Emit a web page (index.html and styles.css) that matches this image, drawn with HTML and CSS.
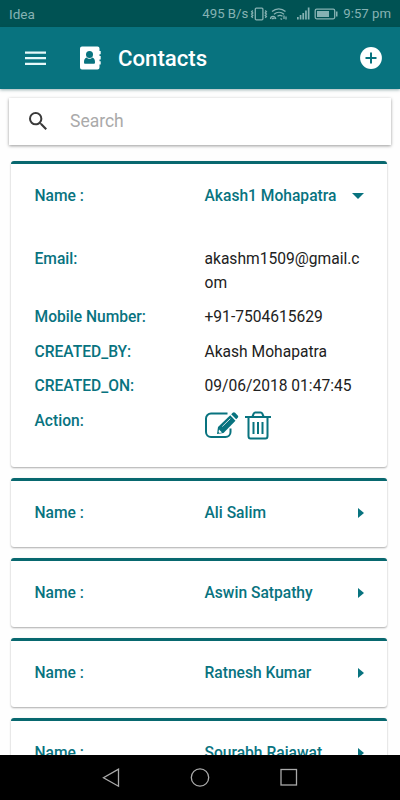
FILE: index.html
```
<!DOCTYPE html>
<html lang="en">
<head>
    <meta charset="utf-8">
    <meta name="viewport" content="width=device-width, initial-scale=1">
    <title>Contacts</title>
    <link rel="stylesheet" href="styles.css">
</head>
<body>
    <div class="statusbar">
        <span class="carrier">Idea</span>
        <span class="speed">495 B/s</span>
        <svg class="status-icons" width="90" height="16" viewBox="0 0 90 16">
            <g fill="none" stroke="#86b2b3" stroke-width="1.3">
                <rect x="5.3" y="2.2" width="7.6" height="11.6" rx="1"/>
                <path d="M2.8 4.5l-1.2 1.2 1.2 1.2-1.2 1.2 1.2 1.2-1.2 1.2 1.2 1.2M15.2 4.5l1.2 1.2-1.2 1.2 1.2 1.2-1.2 1.2 1.2 1.2-1.2 1.2"/>
                <path d="M22 5.600c4-3.700 9.500-3.700 13.500 0M24 8.300c3-2.700 7-2.700 10 0M27.500 10.300c1.500-1.200 3.500-1.200 5 0M20.500 13c.3-3.500 4.500-3.500 5.300 0M22.300 13.200c0-1.400 1.700-1.400 1.900 0"/>
                <path d="M30.500 12.400l1.500 1.200M34 9.500v3.500M36 10.500v3"/>
                <rect x="65.200" y="3.200" width="19.500" height="9.600" rx="1.500"/>
            </g>
            <g fill="#86b2b3">
                <path d="M47 11h1.700v2.500H47zM49.700 9h1.700v4.500h-1.700zM52.400 7h1.700v6.500h-1.700zM55.100 4.500h1.700v9h-1.700zM57.800 1.500h1.700v12h-1.700z"/>
                <path d="M67 5h12v6H67zM86 5.500h1.500v5H86z"/>
            </g>
        </svg>
        <span class="time">9:57 pm</span>
    </div>

    <header class="toolbar">
        <svg class="menu" width="21" height="15" viewBox="0 0 21 15" fill="#e6f8f9">
            <path d="M0 .5h21v2.300H0zM0 6h21v2.300H0zM0 11.700h21V14H0z"/>
        </svg>
        <svg class="book" width="22" height="24" viewBox="0 0 22 24">
            <path fill="#fff" d="M2 .5h15.500a2 2 0 0 1 2 2V5h1.200v3.200h-1.200v1.700h1.200v3.600h-1.200v1.700h1.200v3.300h-1.200v2.900a2 2 0 0 1-2 2H2a2 2 0 0 1-2-2V2.500a2 2 0 0 1 2-2z"/>
            <g fill="#08737f">
                <circle cx="9.500" cy="8.500" r="3.500"/>
                <path d="M6.500 11.500c-1.800.7-2.500 2.200-2.500 4.700 0 1 .5 1.500 1.300 1.500h8.400c.8 0 1.300-.5 1.300-1.500 0-2.500-.7-4-2.500-4.700-1.600 1.800-4.400 1.800-6 0z"/>
            </g>
        </svg>
        <h1>Contacts</h1>
        <svg class="add" width="22" height="22" viewBox="0 0 22 22">
            <circle cx="11" cy="11" r="10.900" fill="#fff"/>
            <path d="M11 5.500v11M5.500 11h11" stroke="#08737f" stroke-width="2"/>
        </svg>
    </header>

    <main>
        <div class="search">
            <svg width="18" height="18" viewBox="3 3 17.500 17.500" fill="#3a3a3a">
                <path d="M15.500 14h-.79l-.28-.27A6.471 6.471 0 0 0 16 9.500 6.500 6.500 0 1 0 9.500 16c1.610 0 3.090-.59 4.230-1.570l.27.28v.79l5 4.990L20.490 19l-4.990-5zm-6 0C7.010 14 5 11.990 5 9.500S7.010 5 9.500 5 14 7.010 14 9.500 11.990 14 9.500 14z"/>
            </svg>
            <input type="text" placeholder="Search" autocomplete="off">
        </div>

        <div class="card open">
            <div class="name-row">
                <span class="label">Name :</span>
                <span class="name">Akash1 Mohapatra</span>
                <span class="arrow down"></span>
            </div>
            <div class="details">
                <div class="row"><span class="label">Email:</span><span class="value">akashm1509@gmail.com</span></div>
                <div class="row"><span class="label">Mobile Number:</span><span class="value">+91-7504615629</span></div>
                <div class="row"><span class="label">CREATED_BY:</span><span class="value">Akash Mohapatra</span></div>
                <div class="row"><span class="label">CREATED_ON:</span><span class="value">09/06/2018 01:47:45</span></div>
                <div class="row">
                    <span class="label">Action:</span>
                    <span class="value actions">
                        <svg width="34" height="30" viewBox="0 0 34 30">
                            <path d="M22.500 3.500H6a5 5 0 0 0-5 5V22a5 5 0 0 0 5 5h14.500a5 5 0 0 0 5-5v-3.500" fill="none" stroke="#08737f" stroke-width="2"/>
                            <path d="M12 24l1-7L25.200 5.300l5.300 5.500L18.500 23z" fill="#08737f"/>
                            <path d="M26.200 4.200l1.500-1.400c.7-.7 1.700-.7 2.400 0l2.600 2.600c.7.700.7 1.700 0 2.400L31.200 9.300z" fill="#08737f"/>
                            <path d="M14 19.500l3 3-2.500.4-.9-.9z" fill="#fff"/>
                            <path d="M17.300 16.500l8-7.800" stroke="#fff" stroke-width=".8"/>
                        </svg>
                        <svg width="26" height="30" viewBox="0 0 26 30" fill="none" stroke="#08737f" stroke-width="2">
                            <path d="M0 7h26M7.500 6.500l1.300-3c.3-.8.800-1 1.500-1h5.400c.7 0 1.200.2 1.500 1l1.300 3M3.500 7.500V26c0 1.800.8 2.500 2 2.500h15c1.200 0 2-.7 2-2.500V7.500"/>
                            <path d="M8.500 12v12M13 12v12M17.500 12v12"/>
                        </svg>
                    </span>
                </div>
            </div>
        </div>

        <div class="card">
            <div class="name-row">
                <span class="label">Name :</span>
                <span class="name">Ali Salim</span>
                <span class="arrow"></span>
            </div>
        </div>
        <div class="card">
            <div class="name-row">
                <span class="label">Name :</span>
                <span class="name">Aswin Satpathy</span>
                <span class="arrow"></span>
            </div>
        </div>
        <div class="card">
            <div class="name-row">
                <span class="label">Name :</span>
                <span class="name">Ratnesh Kumar</span>
                <span class="arrow"></span>
            </div>
        </div>
        <div class="card">
            <div class="name-row">
                <span class="label">Name :</span>
                <span class="name">Sourabh Rajawat</span>
                <span class="arrow"></span>
            </div>
        </div>
    </main>

    <nav class="navbar">
        <svg width="20" height="20" viewBox="0 0 20 20"><path d="M17.500 1.200v17L2.500 9.700z"/></svg>
        <svg width="20" height="20" viewBox="0 0 20 20"><circle cx="10" cy="9.500" r="8.700"/></svg>
        <svg width="20" height="20" viewBox="0 0 20 20"><rect x="2" y="1.500" width="15.500" height="15.500"/></svg>
    </nav>
</body>
</html>
```
FILE: styles.css
```
* {
    box-sizing: border-box;
}

body {
    margin: 0;
    height: 800px;
    display: flex;
    flex-direction: column;
    overflow: hidden;
    background-color: #fefefe;
    font-family: Roboto, "Liberation Sans", sans-serif;
    font-size: 15.6px;
}

svg {
    display: block;
    flex: none;
}

.statusbar {
    flex: none;
    height: 27px;
    display: flex;
    align-items: center;
    padding: 0 9px;
    background-color: #005253;
    color: #86b2b3;
    font-size: 13.5px;
}

.carrier {
    flex: 1;
}

.speed,
.time {
    font-size: 13.2px;
}

.status-icons {
    margin: 0 3px 0 2px;
}

.toolbar {
    flex: none;
    height: 62px;
    display: flex;
    align-items: center;
    padding: 0 18px 0 25px;
    background-color: #08737f;
    color: white;
    box-shadow: 0 1px 3px rgba(0, 60, 65, 0.4);
}

.book {
    margin-left: 34px;
}

.toolbar h1 {
    flex: 1;
    margin: 0 0 0 16px;
    font-size: 22.2px;
    font-weight: 500;
}

main {
    flex: 1;
    min-height: 0;
    overflow: hidden;
    padding: 9px 9px 0;
}

.search {
    height: 47px;
    display: flex;
    align-items: center;
    padding-left: 20px;
    margin-bottom: 16px;
    background-color: white;
    box-shadow: 0 1px 3px rgba(0, 0, 0, 0.4);
}

.search svg {
    margin-bottom: 1px;
}

.search input {
    flex: 1;
    min-width: 0;
    margin-left: 23px;
    padding: 0 0 1px;
    border: none;
    outline: none;
    background: none;
    font-family: inherit;
    font-size: 17.5px;
}

.search input::placeholder {
    color: #aaa;
}

.card {
    height: 69px;
    margin: 0 4px 11px 2px;
    padding: 0 24px 0 23.5px;
    border-top: 3px solid #08686f;
    border-radius: 3px;
    background-color: white;
    box-shadow: 0 1px 2px rgba(0, 0, 0, 0.33);
}

.card.open {
    height: 306px;
}

.name-row,
.row {
    display: grid;
    grid-template-columns: 170px 1fr;
    line-height: 24px;
}

.name-row {
    grid-template-columns: 170px 1fr auto;
    align-items: center;
    padding-top: 20px;
}

.label,
.name {
    color: #08737f;
    font-weight: 500;
}

.arrow {
    border: 5px solid transparent;
    border-left: 6px solid #08737f;
    border-right: 0;
    margin-right: -1px;
}

.arrow.down {
    border: 6px solid transparent;
    border-top: 6px solid #08737f;
    border-bottom: 0;
}

.details {
    padding-top: 39px;
}

.row {
    margin-bottom: 10.4px;
}

.value {
    color: #212121;
    word-break: break-all;
}

.actions {
    display: flex;
    gap: 6px;
    padding-top: 1px;
}

.navbar {
    flex: none;
    height: 45px;
    display: flex;
    justify-content: center;
    align-items: center;
    gap: 69px;
    background-color: black;
}

.navbar svg {
    fill: none;
    stroke: #aaa;
    stroke-width: 1.3;
}
```
